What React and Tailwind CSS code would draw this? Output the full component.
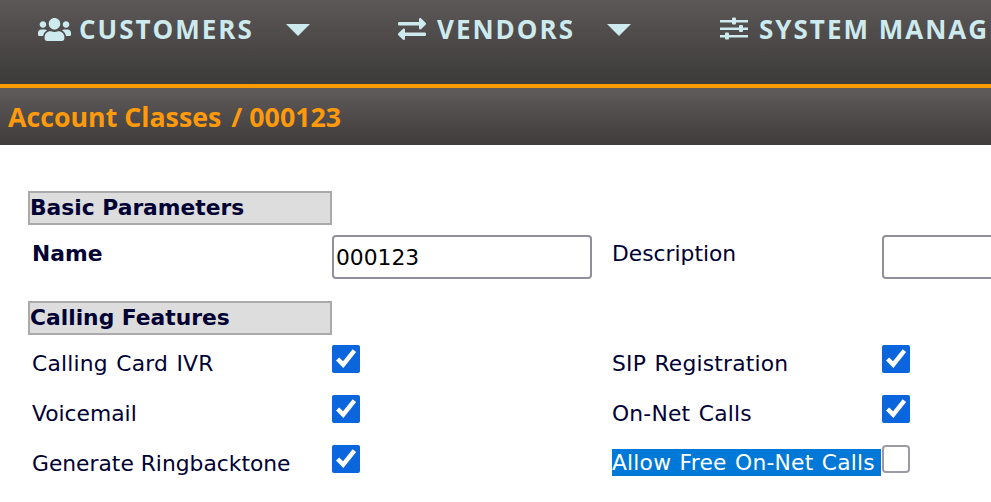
import { FaUsers, FaExchangeAlt } from 'react-icons/fa'

function SlidersIcon() {
  return (
    <svg width="28" height="24" viewBox="0 0 28 24" fill="currentColor">
      <rect x="0" y="3" width="28" height="2.5" />
      <rect x="12" y="0.5" width="4" height="7" rx="1" />
      <rect x="0" y="10.5" width="28" height="2.5" />
      <rect x="19" y="8" width="4" height="7" rx="1" />
      <rect x="0" y="18" width="28" height="2.5" />
      <rect x="5" y="15.5" width="4" height="7" rx="1" />
    </svg>
  )
}

function NavItem({ icon, label, caret, className }) {
  return (
    <div className={`flex items-center h-[30px] shrink-0 ${className}`}>
      <span className="flex items-center justify-center w-[34px] mr-[8px]">{icon}</span>
      <span className="text-[26px] font-bold tracking-[2px] leading-none whitespace-nowrap">{label}</span>
      {caret && <span className="ml-[32px] mt-[2px] w-0 h-0 border-x-[12px] border-x-transparent border-t-[12px] border-t-[#cdeaee]" />}
    </div>
  )
}

function SectionTitle({ children }) {
  return (
    <div className="w-[304px] h-[34px] border-2 border-[#aaaaaa] bg-[#dddddd] font-bold text-[21.8px] leading-[29px] text-[#000033]">
      {children}
    </div>
  )
}

const LABEL_FIT = '[word-spacing:1.3px] tracking-[0.2px]'

function CheckRow({ label, checked, labelClass = LABEL_FIT, width = 'w-[300px]' }) {
  return (
    <div className="flex h-[50px]">
      <div className={`${width} shrink-0 leading-[38px]`}>
        <span className={labelClass}>{label}</span>
      </div>
      <input type="checkbox" defaultChecked={checked} className="w-7 h-7 m-0 shrink-0 accent-[#0b65dc]" />
    </div>
  )
}

export default function App() {
  return (
    <div className="w-[991px] h-[502px] overflow-hidden bg-white" style={{ fontFamily: '"DejaVu Sans", sans-serif' }}>
      <header className="h-[84px] flex items-start pt-[14px] pl-[37px] overflow-hidden bg-gradient-to-b from-[#5c5857] to-[#3d3a3a] text-[#cdeaee]" style={{ fontFamily: '"Open Sans", sans-serif' }}>
        <NavItem icon={<FaUsers size={33} />} label="CUSTOMERS" caret className="w-[358px]" />
        <NavItem icon={<FaExchangeAlt size={28} />} label="VENDORS" caret className="w-[322px]" />
        <NavItem icon={<SlidersIcon />} label="SYSTEM MANAGEMENT" />
      </header>
      <div className="h-[4px] bg-[#ff9a00]" />
      <div className="h-[57px] pl-[8px] pt-[2px] flex items-center bg-gradient-to-b from-[#5f5b5a] to-[#403c3c] text-[#ff9a0a] font-bold text-[26.75px] whitespace-pre" style={{ fontFamily: '"Open Sans", sans-serif' }}>
        <span>Account Classes</span>
        <span className="ml-[10px]">/ 000123</span>
      </div>

      <main className="pt-[46px] pl-[28px] text-[21.8px] text-[#000033]">
        <SectionTitle>Basic Parameters</SectionTitle>
        <div className="flex h-[66px] pt-[10px]">
          <div className="w-[304px] shrink-0 pl-[4px] font-bold leading-[38px]">Name</div>
          <input readOnly value="000123" className="w-[260px] h-[44px] shrink-0 border-2 border-[#918f9b] rounded-[4px] pl-[2px] pt-[1px] text-black outline-none" />
          <div className="w-[290px] pl-[20px] shrink-0 leading-[38px]">Description</div>
          <input readOnly className="w-[260px] h-[44px] shrink-0 border-2 border-[#918f9b] rounded-[4px]" />
        </div>
        <div className="mt-[10px]">
          <SectionTitle>Calling Features</SectionTitle>
        </div>
        <div className="flex pt-[10px] pl-[4px]">
          <div className="w-[580px] shrink-0">
            <CheckRow label="Calling Card IVR" checked />
            <CheckRow label="Voicemail" checked labelClass="" />
            <CheckRow label="Generate Ringbacktone" checked labelClass="" />
          </div>
          <div className="shrink-0">
            <CheckRow label="SIP Registration" checked width="w-[270px]" />
            <CheckRow label="On-Net Calls" checked width="w-[270px]" />
            <div className="flex h-[50px]">
              <div className="w-[270px] shrink-0 pt-[4px]">
                <div className={`bg-[#0078d7] text-white h-[27px] leading-[28px] w-[269px] whitespace-pre ${LABEL_FIT}`}>Allow Free On-Net Calls</div>
              </div>
              <input type="checkbox" className="appearance-none w-7 h-7 m-0 shrink-0 border-2 border-[#9c9aa6] rounded-[4px] bg-white" />
            </div>
          </div>
        </div>
      </main>
    </div>
  )
}
